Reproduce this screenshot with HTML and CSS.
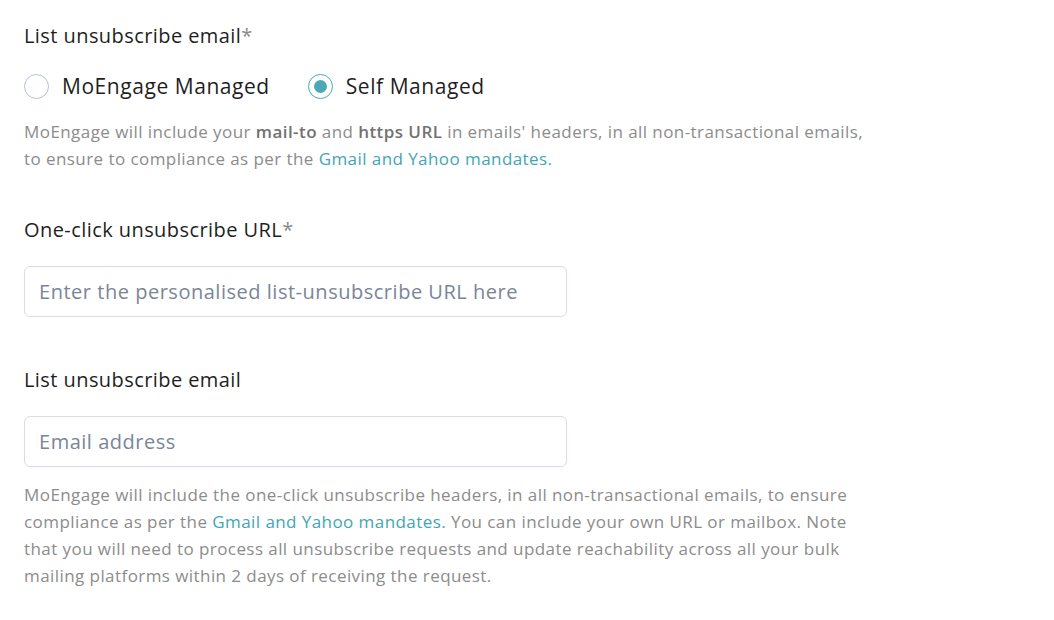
FILE: index.html
```html
<!DOCTYPE html>
<html>
<head>
<meta charset="utf-8">
<link rel="stylesheet" href="styles.css">
</head>
<body>
<div class="form">
  <div class="field">
    <div class="label">List unsubscribe email<span class="req">*</span></div>
    <div class="radios">
      <label class="radio"><span class="circle"></span><span class="rtext">MoEngage Managed</span></label>
      <label class="radio checked"><span class="circle"><span class="dot"></span></span><span class="rtext">Self Managed</span></label>
    </div>
    <p class="help">MoEngage will include your <b>mail-to</b> and <b>https URL</b> in emails' headers, in all non-transactional emails,<br>to ensure to compliance as per the <a class="link">Gmail and Yahoo mandates.</a></p>
  </div>
  <div class="field f2">
    <div class="label">One-click unsubscribe URL<span class="req">*</span></div>
    <div class="input">Enter the personalised list-unsubscribe URL here</div>
  </div>
  <div class="field f3">
    <div class="label">List unsubscribe email</div>
    <div class="input">Email address</div>
    <p class="help narrow">MoEngage will include the one-click unsubscribe headers, in all non-transactional emails, to ensure compliance as per the <a class="link">Gmail and Yahoo mandates.</a> You can include your own URL or mailbox. Note that you will need to process all unsubscribe requests and update reachability across all your bulk mailing platforms within 2 days of receiving the request.</p>
  </div>
</div>
</body>
</html>
```
FILE: styles.css
```css
html, body { margin: 0; padding: 0; background: #fff; }
body { font-family: "Open Sans", "Noto Sans", sans-serif; color: #1f1f1f; }
.form { padding: 22px 24px; display: flex; flex-direction: column; }
.label { font-size: 20px; line-height: 26px; color: #1f1f1f; letter-spacing: 0.43px; margin-top: 1px; }
.req { color: #8a8a8a; }
.radios { display: flex; gap: 38px; margin-top: 23px; align-items: center; }
.radio { display: flex; align-items: center; gap: 13px; font-size: 21px; color: #1f1f1f; letter-spacing: 0.55px; }
.circle { width: 25px; height: 25px; border: 1px solid #b5c0d9; border-radius: 50%; display: flex; align-items: center; justify-content: center; box-sizing: border-box; }
.checked .circle { border-color: #4ba9b7; }
.dot { width: 13px; height: 13px; border-radius: 50%; background: #4ba9b7; }
.help { margin: 18px 0 0; font-size: 17px; line-height: 27.3px; color: #8c8c8c; letter-spacing: 0.43px; }
.help b { color: #727272; font-weight: 600; }
.link { color: #3fa6b4; }
.f2 { margin-top: 43px; }
.f3 { margin-top: 49px; }
.input { margin-top: 23px; width: 543px; height: 51px; box-sizing: border-box; border: 1px solid #d8dde9; border-radius: 6px; padding: 0 14px; display: flex; align-items: center; font-size: 20px; color: #7a8599; letter-spacing: 0.52px; }
.narrow { width: 850px; margin-top: 14px; }
```
